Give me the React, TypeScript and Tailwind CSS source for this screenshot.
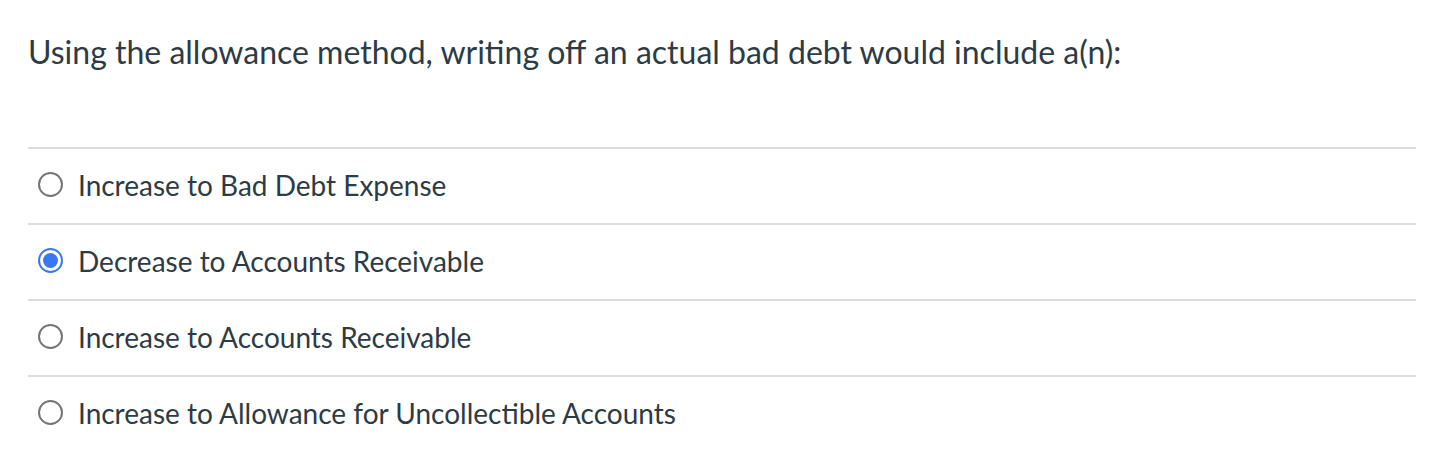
import React, { useState } from 'react';

const options = [
    'Increase to Bad Debt Expense',
    'Decrease to Accounts Receivable',
    'Increase to Accounts Receivable',
    'Increase to Allowance for Uncollectible Accounts',
];

// ─── Radio ──────────────────────────────────────────────────────────────
const Radio: React.FC<{ checked: boolean }> = ({ checked }) =>
    checked ? (
        <span className="w-[25px] h-[25px] rounded-full border-2 border-[#3a78f2] flex items-center justify-center shrink-0">
            <span className="w-[15px] h-[15px] rounded-full bg-[#3a78f2]" />
        </span>
    ) : (
        <span className="w-[25px] h-[25px] rounded-full border-2 border-[#757575] shrink-0" />
    );

export default function App() {
    const [selected, setSelected] = useState(1);

    return (
        <div
            className="bg-white w-[1440px] h-[462px] pl-[28px] pr-[24px] text-[#2d3b45]"
            style={{ fontFamily: 'Lato, "Noto Sans", sans-serif' }}
        >
            <div className="h-[147px] pt-[31px]">
                <p className="text-[32px] leading-[42px]">
                    Using the allowance method, writing off an actual bad debt would include a(n):
                </p>
            </div>
            <div className="flex flex-col">
                {options.map((opt, i) => (
                    <label
                        key={opt}
                        onClick={() => setSelected(i)}
                        className="border-t-2 border-[#dcdcdc] h-[76px] flex items-center gap-[15px] pl-[10px] pb-[3px] cursor-pointer"
                    >
                        <Radio checked={selected === i} />
                        <span className="text-[28px] leading-none">{opt}</span>
                    </label>
                ))}
            </div>
        </div>
    );
}
